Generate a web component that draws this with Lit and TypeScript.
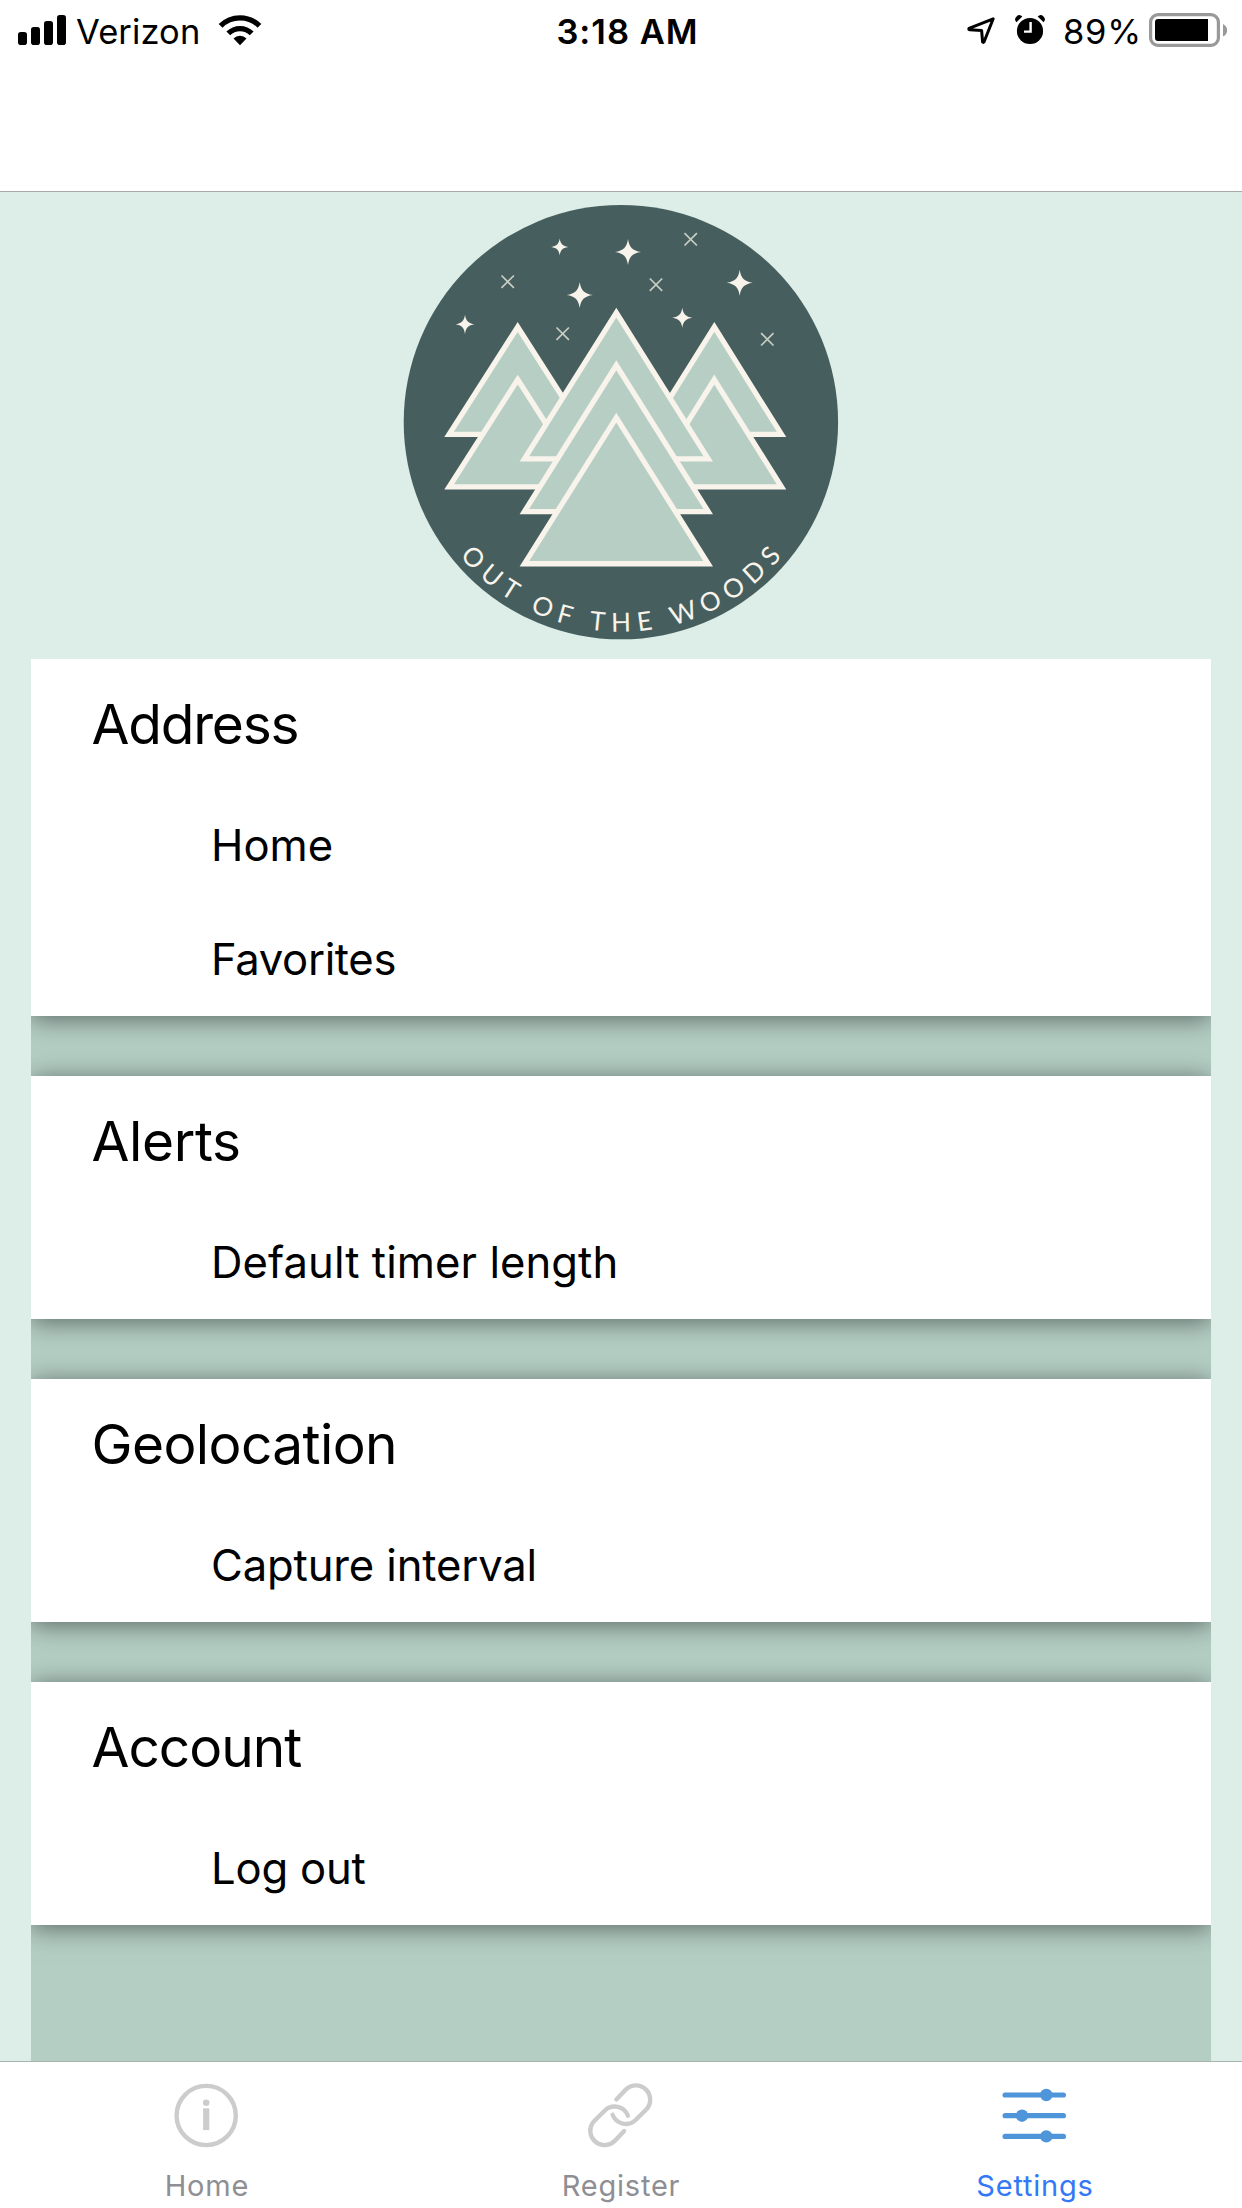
import { LitElement, html, css, svg } from "lit";
import { customElement, property } from "lit/decorators.js";

const FONT = css`Inter, "Liberation Sans", sans-serif`;

interface Label {
  text: string;
  tracking: number;
}

@customElement("status-bar")
class StatusBar extends LitElement {
  static styles = css`
    :host {
      display: grid;
      grid-template-columns: 1fr auto 1fr;
      align-items: center;
      height: 64px;
      padding: 0 15px 0 18px;
      font-family: ${FONT};
      font-size: 34.5px;
      line-height: 64px;
      color: #000;
    }
    svg { display: block; flex: none; }
    .left, .right { display: flex; align-items: center; height: 64px; }
    .right { justify-content: flex-end; }
    .carrier { margin-left: 9px; width: 142px; letter-spacing: 0.1px; white-space: nowrap; }
    .time { padding-left: 10px; font-weight: 600; letter-spacing: 1px; white-space: nowrap; }
    .alarm { margin-left: 19px; }
    .percent { margin-left: 18px; width: 86px; white-space: nowrap; letter-spacing: 0.7px; }
  `;
  render() {
    return html`
      <div class="left">
        <svg width="49" height="64" viewBox="18 0 49 64">
          <rect x="18" y="32" width="9" height="13" rx="2.8" />
          <rect x="31" y="27" width="9" height="18" rx="2.8" />
          <rect x="44" y="21" width="9" height="24" rx="2.8" />
          <rect x="57" y="15" width="9" height="30" rx="2.8" />
        </svg>
        <span class="carrier">Verizon</span>
        <svg width="44" height="64" viewBox="218 0 44 64">
          <g fill="none" stroke="#000" stroke-width="5.4">
            <path d="M220.6 25.8A27.6 27.6 0 0 1 259.4 25.8" />
            <path d="M228.3 33.4A16.7 16.7 0 0 1 251.7 33.4" />
          </g>
          <path d="M240 45.2L233.5 38.4A9.2 9.2 0 0 1 246.5 38.4Z" />
        </svg>
      </div>
      <div class="time">3:18 AM</div>
      <div class="right">
        <svg width="30" height="64" viewBox="966 0 30 64">
          <path d="M993.2 18.8L969 28.4Q968.4 29.6 969.6 29.7L981.6 30.4L982.6 42Q983.3 43 984 42Z"
            fill="none" stroke="#000" stroke-width="3" stroke-linejoin="round" />
        </svg>
        <svg class="alarm" width="30" height="64" viewBox="1015 0 30 64">
          <circle cx="1030" cy="31" r="13.1" />
          <path d="M1016.4 22.2A4 4 0 0 1 1022.3 16.6Z M1043.6 22.2A4 4 0 0 0 1037.7 16.6Z" />
          <path d="M1030.6 22V31.6H1024" fill="none" stroke="#fff" stroke-width="2.4" />
        </svg>
        <span class="percent">89%</span>
        <svg width="78" height="64" viewBox="1149 0 78 64">
          <rect x="1150.6" y="14.7" width="67.8" height="30.6" rx="7.4" fill="none" stroke="#999" stroke-width="3.2" />
          <path d="M1158 19H1208V41H1158Q1155 41 1155 38V22Q1155 19 1158 19Z" />
          <path d="M1223 24Q1227.2 26 1227.2 30.2T1223 36.4Z" fill="#999" />
        </svg>
      </div>
    `;
  }
}

@customElement("woods-logo")
class WoodsLogo extends LitElement {
  static styles = css`
    :host { display: block; width: 436px; height: 436px; }
    svg { display: block; }
    .disc { fill: #465f5e; }
    .tree { fill: #b6cec4; stroke: #f8f3eb; stroke-width: 5.3; }
    .star { fill: #f8f3eb; }
    .cross { fill: none; stroke: #c9cec5; stroke-width: 1.7; }
    .motto { font: 400 26px Lato, sans-serif; letter-spacing: 7.1px; fill: #f8f3eb; }
  `;
  private tree(x: number, half: number, top: number, base: number) {
    return svg`<path class="tree" d="M${x} ${top + 4.95}L${x + half - 4.8} ${base - 2.65}H${x - half + 4.8}Z" />`;
  }
  private star(x: number, y: number, r: number) {
    return svg`<path class="star" transform="translate(${x} ${y}) scale(${r})"
      d="M0 -1C.1 -.35 .35 -.1 1 0C.35 .1 .1 .35 0 1C-.1 .35 -.35 .1 -1 0C-.35 -.1 -.1 -.35 0 -1Z" />`;
  }
  private cross(x: number, y: number) {
    return svg`<path class="cross" transform="translate(${x} ${y})" d="M-6.2 -6.2L6.2 6.2M6.2 -6.2L-6.2 6.2" />`;
  }
  render() {
    return html`
      <svg width="436" height="436" viewBox="403 204 436 436">
        <circle class="disc" cx="620.9" cy="422.1" r="217.2" />
        ${this.star(559.7, 247, 8.4)} ${this.star(628, 252, 13)} ${this.star(579.7, 295, 13)}
        ${this.star(465, 324.3, 9.6)} ${this.star(739.7, 282.7, 13)} ${this.star(682.3, 317.7, 10)}
        ${this.cross(507.7, 281.7)} ${this.cross(562.7, 333.7)} ${this.cross(690.7, 239.3)}
        ${this.cross(656, 284.7)} ${this.cross(767.3, 339.3)}
        ${this.tree(517.7, 73.4, 322, 437)} ${this.tree(517.7, 73.4, 374.6, 489.6)}
        ${this.tree(714.3, 72, 322, 437)} ${this.tree(714.3, 72, 374.6, 489.6)}
        ${this.tree(616.3, 96.7, 307.7, 461.6)} ${this.tree(616.3, 96.7, 360.3, 514.2)}
        ${this.tree(616.3, 96.7, 412.7, 566.4)}
        <path id="arc" d="M411.4 422A209.6 209.6 0 0 0 830.6 422" fill="none" />
        <text class="motto" text-anchor="middle">
          <textPath href="#arc" startOffset="50.5%">OUT OF THE WOODS</textPath>
        </text>
      </svg>
    `;
  }
}

@customElement("settings-card")
class SettingsCard extends LitElement {
  @property({ attribute: false }) heading: Label = { text: "", tracking: 0 };
  @property({ attribute: false }) items: Label[] = [];
  static styles = css`
    :host {
      display: block;
      padding-top: 1px;
      background: #fff;
      box-shadow: 0 3px 24px rgba(0, 0, 0, 0.5);
      font-family: ${FONT};
      color: #000;
    }
    .heading { margin: 0; padding-left: 60.5px; height: 128px; font-size: 55px; font-weight: 400; line-height: 129px; }
    .item { padding-left: 180px; height: 114px; font-size: 43.6px; line-height: 116px; }
  `;
  render() {
    return html`
      <h2 class="heading" style="letter-spacing:${this.heading.tracking}px">${this.heading.text}</h2>
      ${this.items.map((i) => html`<div class="item" style="letter-spacing:${i.tracking}px">${i.text}</div>`)}
    `;
  }
}

@customElement("tab-bar")
class TabBar extends LitElement {
  static styles = css`
    :host {
      display: grid;
      grid-template-columns: repeat(3, 1fr);
      box-sizing: border-box;
      height: 147px;
      border-top: 1px solid #a9b3af;
      background: #fff;
      font-family: ${FONT};
    }
    .tab { display: flex; flex-direction: column; align-items: center; padding-top: 20px; color: #8e8e93; }
    .active { color: #3478f6; }
    svg { display: block; }
    .label { margin-top: 16px; font-size: 29px; line-height: 42px; letter-spacing: 0.8px; }
    .line { fill: none; stroke: #ccc; stroke-width: 4.4; stroke-linecap: round; stroke-linejoin: round; }
    .dim { fill: #ccc; }
    .slider { stroke: #4f95da; stroke-width: 5.2; stroke-linecap: round; }
    .knob { fill: #4f95da; }
  `;
  render() {
    const link = "M27.9 16L37.3 6.1A14.2 14.2 0 0 1 57.5 26.3L47.1 36.5A14.2 14.2 0 0 1 24.1 31.3";
    return html`
      <div class="tab">
        <svg width="67" height="67" viewBox="0 0 67 67">
          <circle class="line" cx="32.2" cy="33.5" r="29.6" />
          <circle class="dim" cx="32.2" cy="20.8" r="3.3" />
          <rect class="dim" x="29.1" y="26.3" width="6.2" height="21.8" />
        </svg>
        <span class="label">Home</span>
      </div>
      <div class="tab">
        <svg width="67" height="67" viewBox="-0.5 -1.5 67 67">
          <path class="line" d=${link} />
          <path class="line" transform="rotate(180 31.75 31.75)" d=${link} />
        </svg>
        <span class="label">Register</span>
      </div>
      <div class="tab active">
        <svg width="67" height="67" viewBox="0 0 67 67">
          <path class="slider" d="M3.1 13H61.4M3.1 33.7H61.4M3.1 54.4H61.4" />
          <circle class="knob" cx="44.3" cy="13" r="6.2" />
          <circle class="knob" cx="20" cy="33.7" r="6.2" />
          <circle class="knob" cx="44.3" cy="54.4" r="6.2" />
        </svg>
        <span class="label">Settings</span>
      </div>
    `;
  }
}

@customElement("app-root")
class AppRoot extends LitElement {
  static styles = css`
    :host { display: flex; flex-direction: column; width: 1242px; height: 2208px; background: #ddeee8; overflow: hidden; }
    .header { box-sizing: border-box; height: 192px; flex: none; background: #fff; border-bottom: 1px solid #a7a9a8; }
    .brand { display: flex; justify-content: center; flex: none; padding: 12px 0 19px; }
    .list { flex: 1; display: flex; flex-direction: column; gap: 60px; margin: 0 31px; background: #b4cec4; overflow: hidden; }
    tab-bar { flex: none; }
  `;
  private sections: { heading: Label; items: Label[] }[] = [
    {
      heading: { text: "Address", tracking: -1.2 },
      items: [{ text: "Home", tracking: 0 }, { text: "Favorites", tracking: -0.35 }],
    },
    { heading: { text: "Alerts", tracking: -0.35 }, items: [{ text: "Default timer length", tracking: 0.07 }] },
    { heading: { text: "Geolocation", tracking: -0.6 }, items: [{ text: "Capture interval", tracking: -0.15 }] },
    { heading: { text: "Account", tracking: -1 }, items: [{ text: "Log out", tracking: -0.2 }] },
  ];
  render() {
    return html`
      <div class="header"><status-bar></status-bar></div>
      <div class="brand"><woods-logo></woods-logo></div>
      <div class="list">
        ${this.sections.map((s) => html`<settings-card .heading=${s.heading} .items=${s.items}></settings-card>`)}
      </div>
      <tab-bar></tab-bar>
    `;
  }
}
